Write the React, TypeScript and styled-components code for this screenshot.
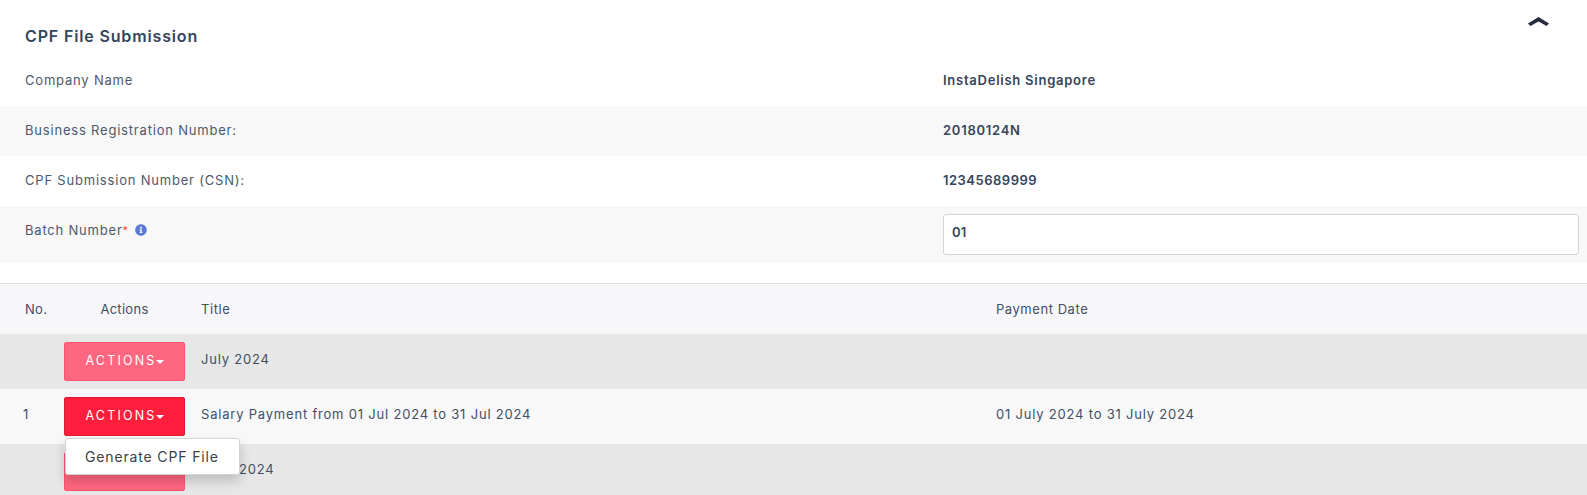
import React from 'react';
import styled, {createGlobalStyle} from 'styled-components';
import {FaInfoCircle} from 'react-icons/fa';

const GlobalStyle = createGlobalStyle`
    html, body {
        margin: 0;
        padding: 0;
        background: #fff;
    }
    body {
        font-family: Inter, "Open Sans", sans-serif;
        font-size: 13px;
        color: #3f4d60;
        overflow: hidden;
    }
`;

const App: React.FunctionComponent = () => {
    return (
        <Page>
            <GlobalStyle/>
            <Header>
                <Heading>CPF File Submission</Heading>
                <Chevron viewBox="0 0 21 9" aria-hidden="true">
                    <path d="M0 6.6 L10.5 0 L21 6.6 L18.6 9 L10.5 4.4 L2.4 9 Z" fill="#252c40"/>
                </Chevron>
            </Header>
            <InfoRow>
                <Label>Company Name</Label>
                <Value>InstaDelish Singapore</Value>
            </InfoRow>
            <InfoRow $shaded>
                <Label>Business Registration Number:</Label>
                <Value>20180124N</Value>
            </InfoRow>
            <InfoRow>
                <Label>CPF Submission Number (CSN):</Label>
                <Value $tight>12345689999</Value>
            </InfoRow>
            <BatchRow>
                <BatchLabel>
                    Batch Number<Required>*</Required>
                    <FaInfoCircle size={12} color="#5c7bd6"/>
                </BatchLabel>
                <BatchInput defaultValue="01"/>
            </BatchRow>
            <Table>
                <TableHeader>
                    <NoHead>No.</NoHead>
                    <ActionsHead>Actions</ActionsHead>
                    <HeadCell>Title</HeadCell>
                    <HeadCell>Payment Date</HeadCell>
                </TableHeader>
                <TableRow $group>
                    <NoCell/>
                    <ActionsCell><ActionButton $faded>ACTIONS<Caret/></ActionButton></ActionsCell>
                    <Cell>July 2024</Cell>
                    <Cell/>
                </TableRow>
                <TableRow>
                    <NoCell>1</NoCell>
                    <ActionsCell>
                        <ActionButton>ACTIONS<Caret/></ActionButton>
                        <Menu><MenuItem>Generate CPF File</MenuItem></Menu>
                    </ActionsCell>
                    <Cell>Salary Payment from 01 Jul 2024 to 31 Jul 2024</Cell>
                    <Cell>01 July 2024 to 31 July 2024</Cell>
                </TableRow>
                <TableRow $group>
                    <NoCell/>
                    <ActionsCell><ActionButton $faded>ACTIONS<Caret/></ActionButton></ActionsCell>
                    <Cell>June 2024</Cell>
                    <Cell/>
                </TableRow>
            </Table>
        </Page>
    );
}

const Page = styled.div`
    width: 1587px;
    height: 495px;
    overflow: hidden;
    background: #fff;
`;

const Header = styled.div`
    height: 56px;
    display: flex;
    justify-content: space-between;
    padding: 0 38px 0 25px;
`;

const Heading = styled.h2`
    margin: 26px 0 0;
    font-size: 16px;
    line-height: 20px;
    font-weight: 600;
    letter-spacing: 0.85px;
    color: #34465c;
`;

const Chevron = styled.svg`
    width: 21px;
    height: 9px;
    margin-top: 17px;
`;

const InfoRow = styled.div<{$shaded?: boolean}>`
    height: 50px;
    display: grid;
    grid-template-columns: 918px 1fr;
    align-items: center;
    padding: 0 0 3px 25px;
    box-sizing: border-box;
    background: ${props => props.$shaded ? '#f8f8f8' : '#fff'};
`;

const Label = styled.div`
    letter-spacing: 0.8px;
    color: #4a5a6e;
`;

const Value = styled.div<{$tight?: boolean}>`
    font-weight: 600;
    letter-spacing: ${props => props.$tight ? '0.5px' : '0.75px'};
    color: #34465c;
`;

const BatchRow = styled.div`
    height: 57px;
    display: grid;
    grid-template-columns: 918px 644px;
    padding: 8px 0 0 25px;
    box-sizing: border-box;
    background: #f8f8f8;
`;

const BatchLabel = styled.div`
    display: flex;
    align-items: center;
    height: 32px;
    letter-spacing: 0.8px;
    color: #4a5a6e;
    svg {
        margin-left: 6px;
    }
`;

const Required = styled.span`
    color: #f0553a;
    align-self: flex-start;
    margin-top: 11px;
    font-size: 11px;
    line-height: 10px;
`;

const BatchInput = styled.input`
    box-sizing: border-box;
    width: 636px;
    height: 41px;
    padding: 0 8px 5px;
    border: 1px solid #d2d4d7;
    border-radius: 3px;
    background: #fff;
    font-family: inherit;
    font-size: 13px;
    font-weight: 600;
    letter-spacing: 0.2px;
    color: #34465c;
    outline: none;
`;

const Table = styled.div`
    margin-top: 20px;
    border-top: 1px solid #dcdcdc;
`;

const columns = '64px 137px 795px 1fr';

const TableHeader = styled.div`
    height: 50px;
    display: grid;
    grid-template-columns: ${columns};
    align-items: center;
    background: #f7f7f9;
    color: #3a4a5e;
`;

const TableRow = styled.div<{$group?: boolean}>`
    height: 55px;
    display: grid;
    grid-template-columns: ${columns};
    align-items: center;
    background: ${props => props.$group ? '#e7e7e7' : '#f8f8f8'};
`;

const Cell = styled.div`
    margin-top: -5px;
    letter-spacing: 0.8px;
    color: #414f66;
`;

const HeadCell = styled.div`
    letter-spacing: 0.55px;
    color: #414f66;
`;

const NoHead = styled(HeadCell)`
    padding-left: 25px;
    letter-spacing: 0.3px;
`;

const ActionsHead = styled(HeadCell)`
    width: 121px;
    text-align: center;
    letter-spacing: 0.3px;
`;

const NoCell = styled(Cell)`
    padding-left: 23px;
`;

const ActionsCell = styled.div`
    position: relative;
`;

const ActionButton = styled.button<{$faded?: boolean}>`
    width: 121px;
    height: 39px;
    display: flex;
    align-items: center;
    justify-content: center;
    padding: 0 0 2px;
    border: 1px solid ${props => props.$faded ? '#ff5470' : '#d81c36'};
    border-radius: 2px;
    background: ${props => props.$faded ? '#ff6680' : '#ff1f3d'};
    color: #fff;
    font-family: inherit;
    font-size: 12.5px;
    letter-spacing: 2.2px;
`;

const Caret = styled.span`
    width: 0;
    height: 0;
    margin: 2px 0 0 -1px;
    border-top: 4px solid #fff;
    border-left: 4px solid transparent;
    border-right: 4px solid transparent;
`;

const Menu = styled.div`
    position: absolute;
    z-index: 2;
    top: 41px;
    left: 1px;
    width: 175px;
    height: 37px;
    box-sizing: border-box;
    display: flex;
    align-items: center;
    border: 1px solid #d4d4d4;
    border-radius: 3px;
    background: #fff;
    box-shadow: 0 6px 12px rgba(0, 0, 0, 0.18);
`;

const MenuItem = styled.div`
    padding-left: 19px;
    font-size: 14px;
    letter-spacing: 0.85px;
    color: #3c3f44;
    white-space: nowrap;
`;

export default App;
